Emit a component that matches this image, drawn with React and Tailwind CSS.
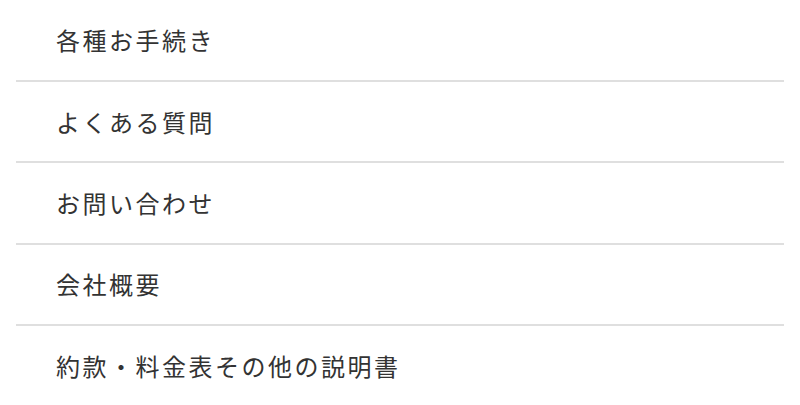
import React from "react";

const items = [
    "各種お手続き",
    "よくある質問",
    "お問い合わせ",
    "会社概要",
    "約款・料金表その他の説明書",
];

export default function App() {
    return (
        <div className="bg-white w-[800px] h-[405px] px-4 pt-[0.7px] font-['Noto_Sans_CJK_JP',sans-serif]">
            <ul>
                {items.map((label, i) => (
                    <li
                        key={label}
                        className={`h-[79.33px] flex items-center pl-[40px] text-[24px] tracking-[2.5px] text-[#333333] ${
                            i < items.length - 1 ? "border-b-2 border-[#dfdfdf] box-content" : ""
                        }`}
                    >
                        {label}
                    </li>
                ))}
            </ul>
        </div>
    );
}
